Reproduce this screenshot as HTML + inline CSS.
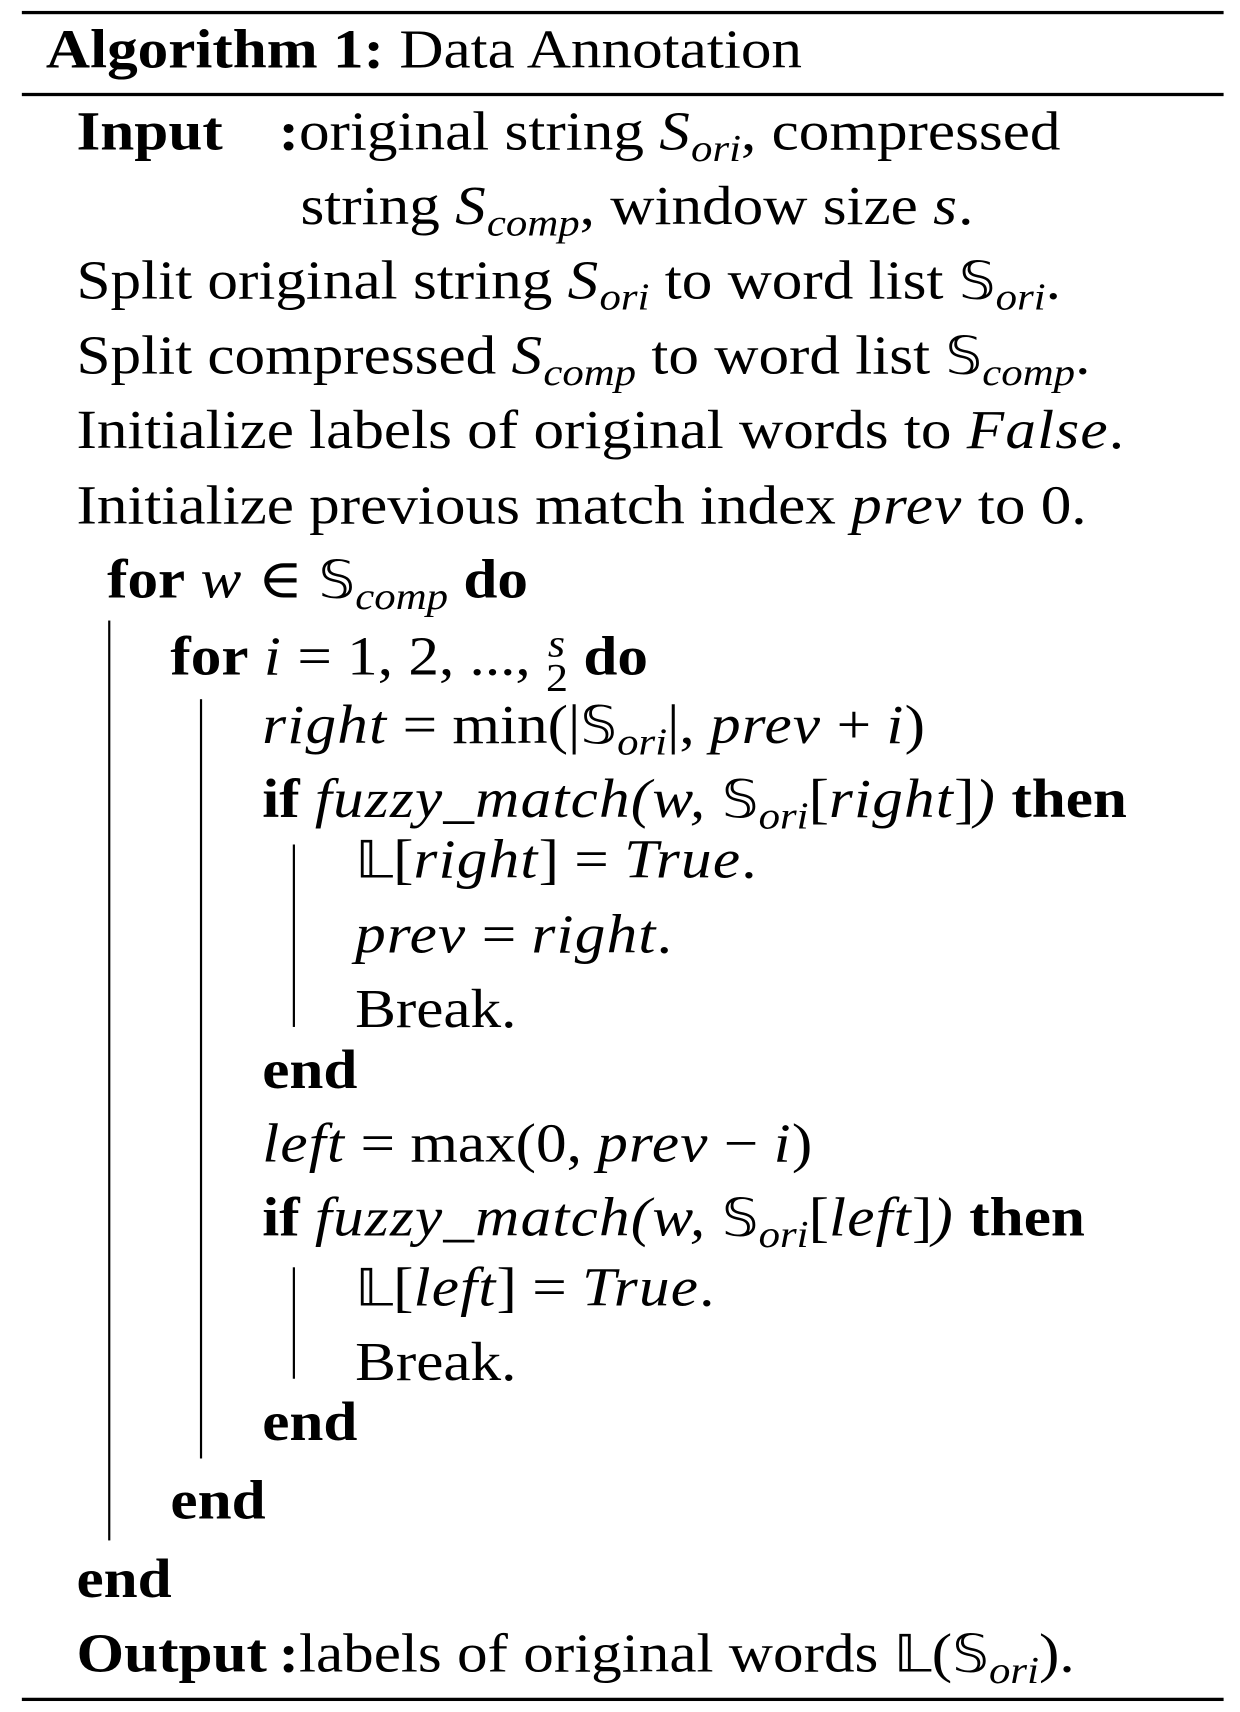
<!DOCTYPE html>
<html><head><meta charset="utf-8"><style>
html,body{margin:0;padding:0;background:#fff;width:1240px;height:1712px;overflow:hidden}
#w{position:absolute;left:0;top:0;width:1135px;height:1567px;transform:scale(1.0925);transform-origin:0 0;font-family:"Liberation Serif","DejaVu Serif",serif;font-size:50px;color:#000}
.l{position:absolute;white-space:nowrap;line-height:49px;transform:scaleX(1.12);transform-origin:0 0}
.r{position:absolute;background:#000}
i{font-style:italic;letter-spacing:1px}
b{font-weight:bold}
sub{font-size:0.7em;vertical-align:-0.3em;line-height:0;font-style:italic}
.ds{font-family:"DejaVu Sans","DejaVu Serif",serif;font-size:0.95em}
.fr{display:inline-block;vertical-align:-0.4em;text-align:center;font-size:0.72em;line-height:0.85em}
</style></head><body><div id="w">
<div class="r" style="left:20px;top:10px;width:1100px;height:3px"></div>
<div class="l" style="left:42px;top:21px"><b>Algorithm 1:</b> Data Annotation</div>
<div class="r" style="left:20px;top:85px;width:1100px;height:3px"></div>
<div class="l" style="left:70px;top:96px"><b>Input</b></div>
<div class="l" style="left:255px;top:96px"><b>:</b>original string <i>S</i><sub>ori</sub>, compressed</div>
<div class="l" style="left:275px;top:164px">string <i>S</i><sub>comp</sub>, window size <i>s</i>.</div>
<div class="l" style="left:70px;top:232px">Split original string <i>S</i><sub>ori</sub> to word list <span class="ds">𝕊</span><sub>ori</sub>.</div>
<div class="l" style="left:70px;top:301px">Split compressed <i>S</i><sub>comp</sub> to word list <span class="ds">𝕊</span><sub>comp</sub>.</div>
<div class="l" style="left:70px;top:369px">Initialize labels of original words to <i>False</i>.</div>
<div class="l" style="left:70px;top:438px">Initialize previous match index <i>prev</i> to 0.</div>
<div class="l" style="left:98px;top:506px"><b>for</b> <i>w</i> ∈ <span class="ds">𝕊</span><sub>comp</sub> <b>do</b></div>
<div class="r" style="left:99px;top:568px;width:2px;height:842px"></div>
<div class="l" style="left:156px;top:574px"><b>for</b> <i>i</i> = 1, 2, ..., <span class="fr"><i>s</i><br>2</span> <b>do</b></div>
<div class="r" style="left:183px;top:640px;width:2px;height:695px"></div>
<div class="l" style="left:240px;top:639px"><i>right</i> = min(|<span class="ds">𝕊</span><sub>ori</sub>|, <i>prev</i> + <i>i</i>)</div>
<div class="l" style="left:240px;top:707px"><b>if</b> <i>fuzzy_match(w,</i> <span class="ds">𝕊</span><sub>ori</sub>[<i>right</i>]<i>)</i> <b>then</b></div>
<div class="r" style="left:268px;top:773px;width:2px;height:167px"></div>
<div class="l" style="left:325px;top:762px"><span class="ds">𝕃</span>[<i>right</i>] = <i>True</i>.</div>
<div class="l" style="left:325px;top:831px"><i>prev</i> = <i>right</i>.</div>
<div class="l" style="left:325px;top:899px">Break.</div>
<div class="l" style="left:240px;top:955px"><b>end</b></div>
<div class="l" style="left:240px;top:1022px"><i>left</i> = max(0, <i>prev</i> − <i>i</i>)</div>
<div class="l" style="left:240px;top:1090px"><b>if</b> <i>fuzzy_match(w,</i> <span class="ds">𝕊</span><sub>ori</sub>[<i>left</i>]<i>)</i> <b>then</b></div>
<div class="r" style="left:268px;top:1160px;width:2px;height:102px"></div>
<div class="l" style="left:325px;top:1154px"><span class="ds">𝕃</span>[<i>left</i>] = <i>True</i>.</div>
<div class="l" style="left:325px;top:1222px">Break.</div>
<div class="l" style="left:240px;top:1277px"><b>end</b></div>
<div class="l" style="left:156px;top:1349px"><b>end</b></div>
<div class="l" style="left:70px;top:1421px"><b>end</b></div>
<div class="l" style="left:70px;top:1489px"><b>Output</b></div>
<div class="l" style="left:255px;top:1489px"><b>:</b>labels of original words <span class="ds">𝕃</span>(<span class="ds">𝕊</span><sub>ori</sub>).</div>
<div class="r" style="left:20px;top:1554px;width:1100px;height:3px"></div>
</div></body></html>
